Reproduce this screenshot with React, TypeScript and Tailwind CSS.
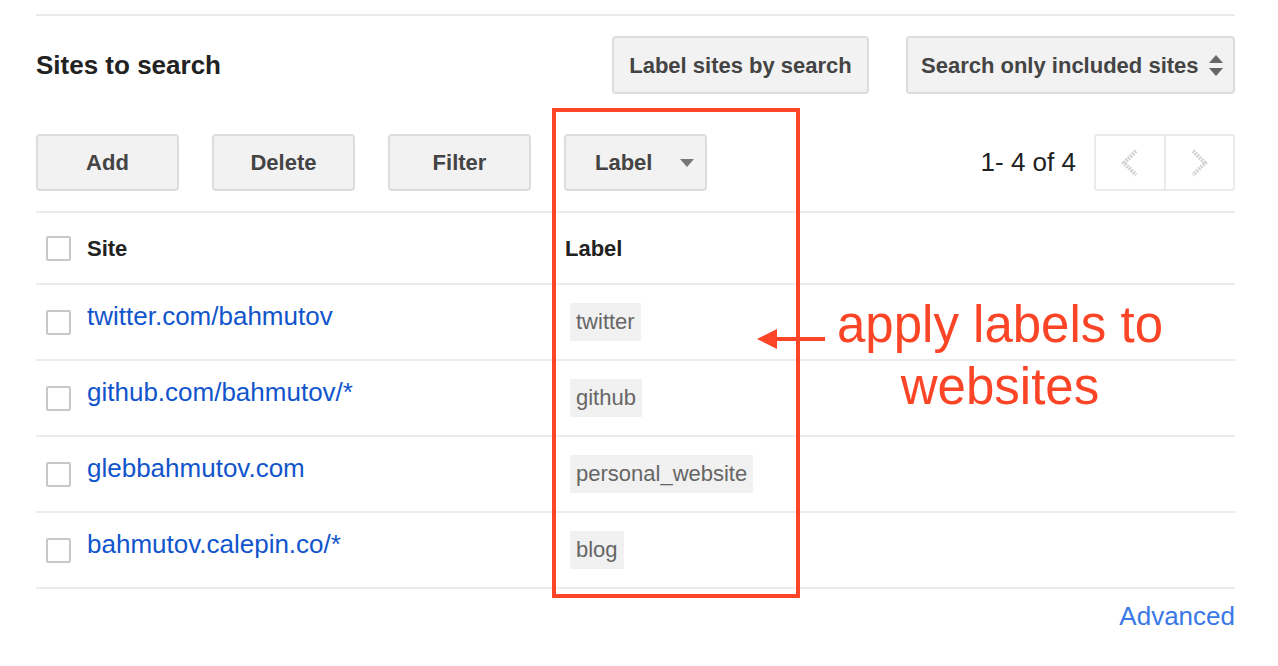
import React from 'react';

// rows of the "sites to search" table
const sites = [
  { url: 'twitter.com/bahmutov', label: 'twitter' },
  { url: 'github.com/bahmutov/*', label: 'github' },
  { url: 'glebbahmutov.com', label: 'personal_website' },
  { url: 'bahmutov.calepin.co/*', label: 'blog' },
];

const btn =
  'flex h-[57px] items-center justify-center rounded-[4px] border-2 border-[#dcdcdc] bg-[#f2f2f2] text-[22px] font-bold text-[#444]';

function Checkbox() {
  return <div className="h-[25px] w-[25px] shrink-0 rounded-[2px] border-2 border-[#c8c8c8] bg-white" />;
}

export default function App() {
  return (
    <div
      className="relative h-[666px] w-[1278px] overflow-hidden bg-white pl-[36px] pt-[14px]"
      style={{ fontFamily: '"Liberation Sans", Arial, sans-serif' }}
    >
      <div className="w-[1199px]">
        <div className="border-t-2 border-[#ebebeb]" />

        {/* title + top controls */}
        <div className="mt-[20px] flex h-[58px] items-center">
          <h1 className="text-[26px] font-bold text-[#222]">Sites to search</h1>
          <div className="ml-auto flex items-center gap-[37px]">
            <button className={`${btn} h-[58px] w-[257px]`}>Label sites by search</button>
            <div className={`${btn} h-[58px] w-[329px] justify-start pl-[13px]`}>
              <span>Search only included sites</span>
              <div className="ml-auto mr-[10px] flex flex-col items-center gap-[5px]">
                <div className="h-0 w-0 border-x-[7px] border-b-[8px] border-x-transparent border-b-[#666]" />
                <div className="h-0 w-0 border-x-[7px] border-t-[8px] border-x-transparent border-t-[#666]" />
              </div>
            </div>
          </div>
        </div>

        {/* toolbar */}
        <div className="mt-[40px] flex h-[57px] items-center gap-[33px]">
          <button className={`${btn} w-[143px]`}>Add</button>
          <button className={`${btn} w-[143px]`}>Delete</button>
          <button className={`${btn} w-[143px]`}>Filter</button>
          <button className={`${btn} w-[143px] justify-start pl-[29px]`}>
            Label
            <span className="ml-[28px] h-0 w-0 border-x-[7px] border-t-[8px] border-x-transparent border-t-[#777]" />
          </button>
          <div className="ml-auto flex items-center">
            <span className="text-[26px] text-[#222]">1- 4 of 4</span>
            <div className="ml-[18px] flex h-[57px] w-[141px] rounded-[3px] border-2 border-[#ebebeb]">
              <div className="flex flex-1 items-center justify-center border-r-2 border-[#ebebeb]">
                <svg width="20" height="28" viewBox="0 0 20 28">
                  <polyline points="16,2 4,14 16,26" fill="none" stroke="#d2d2d2" strokeWidth="4" strokeDasharray="2 1" />
                </svg>
              </div>
              <div className="flex flex-1 items-center justify-center">
                <svg width="20" height="28" viewBox="0 0 20 28">
                  <polyline points="4,2 16,14 4,26" fill="none" stroke="#d2d2d2" strokeWidth="4" strokeDasharray="2 1" />
                </svg>
              </div>
            </div>
          </div>
        </div>

        {/* table */}
        <div className="mt-[20px] border-t-2 border-[#ebebeb]">
          <div className="grid h-[72px] grid-cols-[529px_1fr] items-center border-b-2 border-[#ebebeb]">
            <div className="flex items-center pl-[10px]">
              <Checkbox />
              <span className="ml-[16px] text-[22px] font-bold text-[#222]">Site</span>
            </div>
            <span className="text-[22px] font-bold text-[#222]">Label</span>
          </div>
          {sites.map((s) => (
            <div key={s.url} className="grid h-[76px] grid-cols-[529px_1fr] border-b-2 border-[#ebebeb]">
              <div className="flex pl-[10px]">
                <div className="flex items-center">
                  <Checkbox />
                </div>
                <a className="ml-[16px] mt-[16px] self-start text-[26px] leading-[30px] text-[#1155cc]">{s.url}</a>
              </div>
              <div className="flex items-center">
                <span className="ml-[5px] h-[38px] bg-[#f1f1f1] px-[6px] text-[22px] leading-[38px] text-[#666]">
                  {s.label}
                </span>
              </div>
            </div>
          ))}
        </div>

        <div className="mt-[12px] text-right text-[26px] leading-[30px] text-[#3b78e7]">Advanced</div>
      </div>

      {/* annotation overlay */}
      <div className="absolute left-[552px] top-[108px] h-[490px] w-[248px] border-4 border-[#fb4526]" />
      <svg className="absolute left-[755px] top-[327px]" width="72" height="24" viewBox="0 0 72 24">
        <polygon points="2,12 22,2 22,22" fill="#fb4526" />
        <line x1="20" y1="12" x2="70" y2="12" stroke="#fb4526" strokeWidth="4" />
      </svg>
      <div className="absolute left-[800px] top-[294px] w-[400px] text-center text-[51px] leading-[62px] text-[#fb4526]">
        apply labels to
        <br />
        websites
      </div>
    </div>
  );
}
